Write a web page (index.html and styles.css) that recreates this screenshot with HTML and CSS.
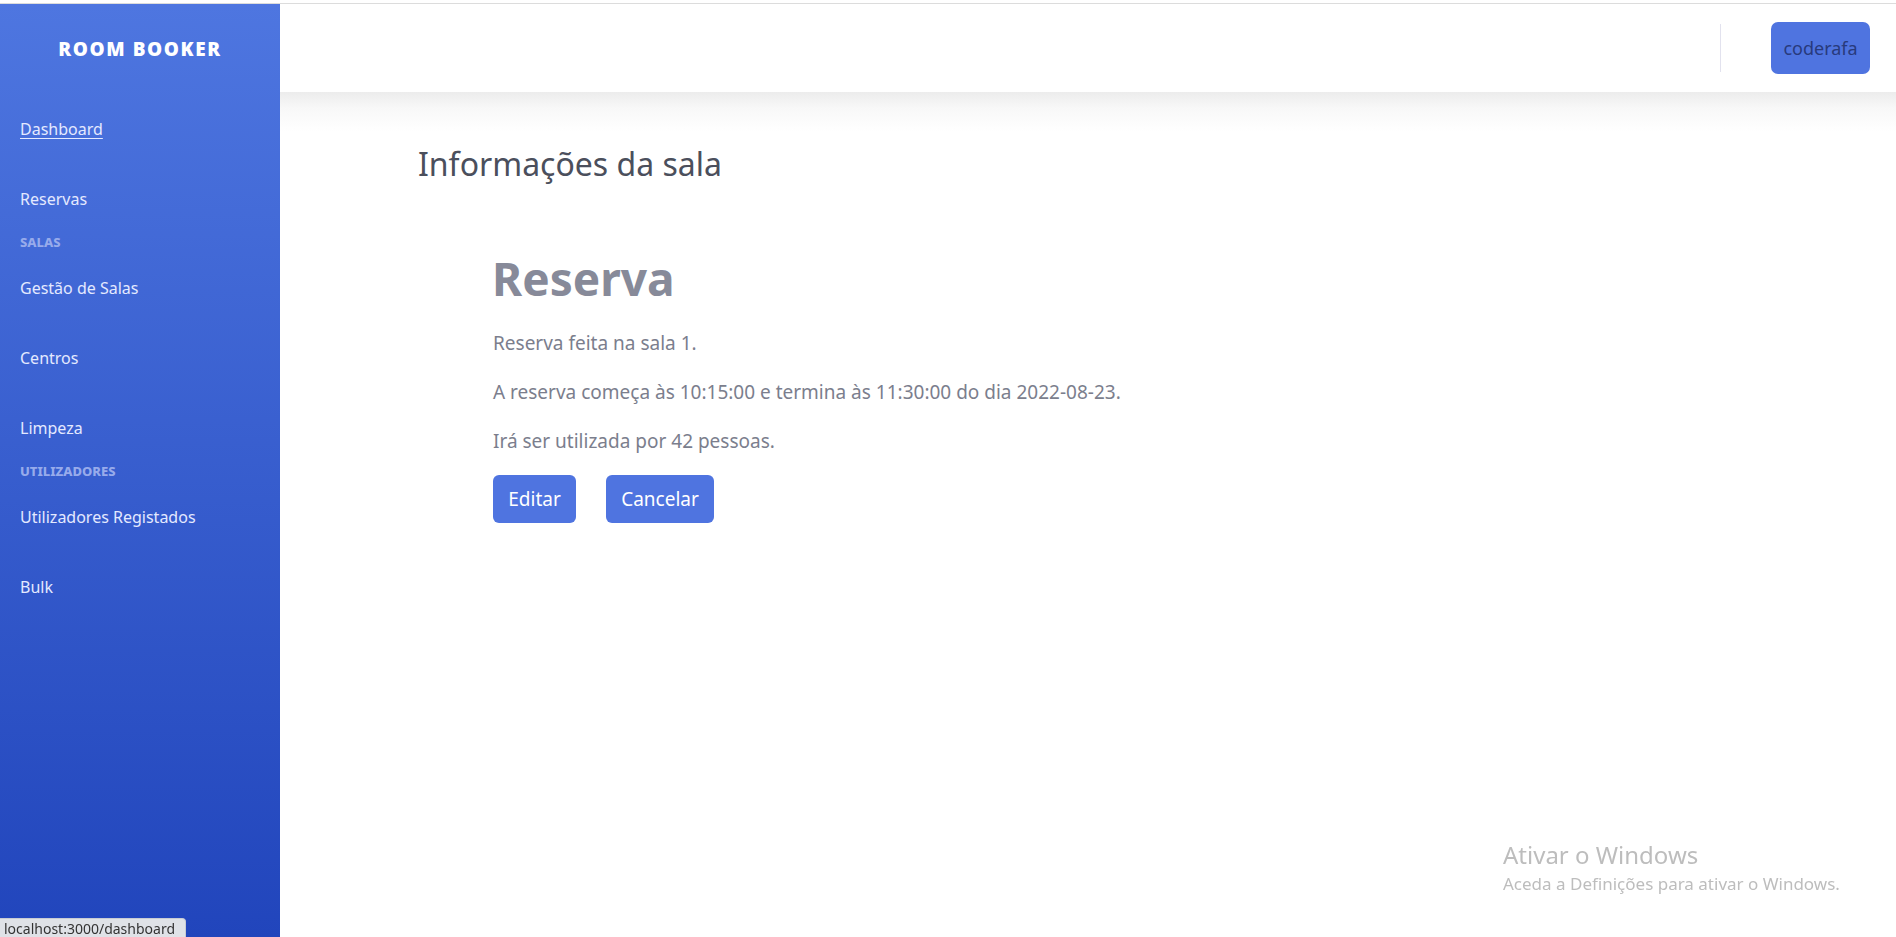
FILE: index.html
```html
<!DOCTYPE html>
<html lang="pt">
<head>
<meta charset="utf-8">
<title>Room Booker</title>
<link rel="stylesheet" href="styles.css">
</head>
<body>
<div class="topline"></div>
<div class="app">
  <aside class="sidebar">
    <div class="brand">ROOM BOOKER</div>
    <nav class="nav">
      <a class="nav-item active" href="#">Dashboard</a>
      <a class="nav-item" href="#">Reservas</a>
      <div class="nav-heading">SALAS</div>
      <a class="nav-item" href="#">Gestão de Salas</a>
      <a class="nav-item" href="#">Centros</a>
      <a class="nav-item" href="#">Limpeza</a>
      <div class="nav-heading">UTILIZADORES</div>
      <a class="nav-item" href="#">Utilizadores Registados</a>
      <a class="nav-item" href="#">Bulk</a>
    </nav>
  </aside>
  <div class="main">
    <header class="header">
      <div class="divider"></div>
      <button class="user-btn">coderafa</button>
    </header>
    <div class="header-shadow"></div>
    <section class="content">
      <h1 class="page-title">Informações da sala</h1>
      <div class="card">
        <h2 class="card-title">Reserva</h2>
        <p class="line first">Reserva feita na sala 1.</p>
        <p class="line">A reserva começa às 10:15:00 e termina às 11:30:00 do dia 2022-08-23.</p>
        <p class="line">Irá ser utilizada por 42 pessoas.</p>
        <div class="actions">
          <button class="btn btn-edit">Editar</button>
          <button class="btn btn-cancel">Cancelar</button>
        </div>
      </div>
    </section>
  </div>
</div>
<div class="watermark">
  <div class="wm-title">Ativar o Windows</div>
  <div class="wm-sub">Aceda a Definições para ativar o Windows.</div>
</div>
<div class="statusbar">localhost:3000/dashboard</div>
</body>
</html>
```

FILE: styles.css
```css
* { box-sizing: border-box; }
html, body { margin: 0; padding: 0; }
body {
  width: 1896px;
  height: 937px;
  overflow: hidden;
  font-family: "Noto Sans", "Open Sans", sans-serif;
  background: #fff;
}
.topline {
  height: 4px;
  background: #fff;
  border-bottom: 1px solid #dcdcdc;
}
.app {
  display: flex;
  height: 933px;
}
.sidebar {
  width: 280px;
  flex: none;
  background: linear-gradient(180deg, #4e76e0 0%, #2145bc 100%);
  color: #e6ebff;
}
.brand {
  height: 90px;
  display: flex;
  align-items: center;
  justify-content: center;
  font-family: "Open Sans", sans-serif;
  font-weight: 800;
  font-size: 19px;
  letter-spacing: 1.6px;
  color: #fff;
}
.nav { display: flex; flex-direction: column; }
.nav-item {
  height: 70px;
  display: flex;
  align-items: center;
  padding-left: 20px;
  font-size: 16px;
  color: #e4e9ff;
  text-decoration: none;
}
.nav-item.active { text-decoration: underline; text-underline-offset: 3px; }
.nav-heading {
  height: 19px;
  display: flex;
  align-items: center;
  padding-left: 20px;
  padding-bottom: 4px;
  font-size: 13px;
  font-weight: 800;
  color: #97abeb;
}
.main {
  flex: 1;
  display: flex;
  flex-direction: column;
  min-width: 0;
}
.header {
  height: 88px;
  display: flex;
  align-items: center;
  justify-content: flex-end;
  padding-right: 26px;
  background: #fff;
}
.divider {
  width: 1px;
  height: 48px;
  background: #e2e2ee;
  margin-right: 50px;
}
.user-btn {
  width: 99px;
  height: 52px;
  border: none;
  border-radius: 7px;
  background: #4f74e0;
  color: #283a7c;
  font-family: "Noto Sans", sans-serif;
  font-size: 18px;
  padding: 0;
}
.header-shadow {
  height: 40px;
  background: linear-gradient(180deg, #ececec 0%, #f8f8f8 40%, #fff 100%);
}
.content {
  padding-left: 138px;
}
.page-title {
  margin: 0;
  font-weight: 400;
  font-size: 32px;
  color: #4b4f5c;
  line-height: 44px;
  margin-top: 10px;
}
.card {
  padding-left: 75px;
  padding-top: 64px;
}
.card-title {
  margin: 0 0 0 -1px;
  font-size: 46px;
  font-weight: 700;
  color: #878a99;
  line-height: 56px;
}
.line {
  margin: 0;
  height: 49px;
  display: flex;
  align-items: center;
  font-size: 19px;
  color: #7b7e8d;
}
.line.first { margin-top: 12px; }
.actions {
  display: flex;
  gap: 30px;
  margin-top: 10px;
}
.btn {
  height: 48px;
  padding: 0;
  border: none;
  border-radius: 6px;
  background: #4f74e0;
  color: #fff;
  font-family: "Noto Sans", sans-serif;
  font-size: 19px;
}
.btn-edit { width: 83px; }
.btn-cancel { width: 108px; }
.watermark {
  position: fixed;
  left: 1503px;
  top: 839px;
  color: #bdbdbd;
}
.wm-title { font-size: 24px; line-height: 32px; }
.wm-sub { font-size: 17px; line-height: 26px; }
.statusbar {
  position: fixed;
  left: 0;
  bottom: 0;
  height: 19px;
  width: 186px;
  background: #dfe2e7;
  border: 1px solid #c8ccd2;
  border-left: none;
  border-bottom: none;
  border-top-right-radius: 4px;
  font-size: 14px;
  line-height: 19px;
  padding-left: 4px;
  color: #333;
  overflow: hidden;
}
```
